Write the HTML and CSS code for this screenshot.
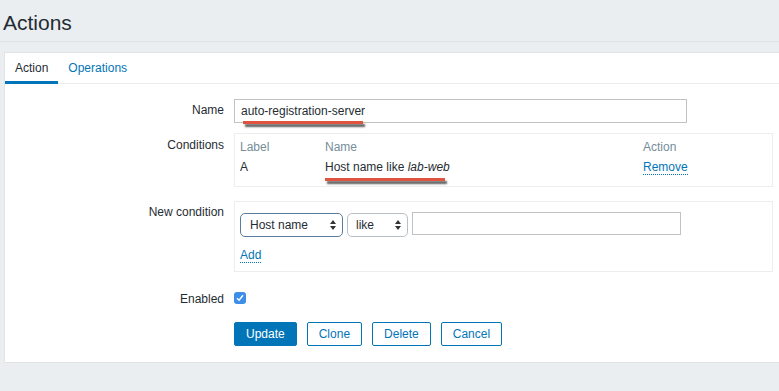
FILE: index.html
```html
<!DOCTYPE html>
<html lang="en">
<head>
    <meta charset="UTF-8">
    <meta name="viewport" content="width=device-width, initial-scale=1.0">
    <title>Actions</title>
    <link rel="stylesheet" href="styles.css">
</head>
<body>
    <h1 class="page-title">Actions</h1>

    <div class="panel">
        <div class="tabs">
            <span class="tab tab-active">Action</span>
            <span class="tab">Operations</span>
        </div>

        <div class="form">
            <div class="form-row row-name">
                <label class="form-label">Name</label>
                <div class="form-field">
                    <input class="text-input name-input" type="text" value="auto-registration-server">
                    <span class="mark mark-name"></span>
                </div>
            </div>

            <div class="form-row row-conditions">
                <label class="form-label">Conditions</label>
                <div class="form-field">
                    <div class="box conditions-box">
                        <table class="conditions">
                            <tr class="cond-head">
                                <td class="col-label">Label</td>
                                <td class="col-name">Name</td>
                                <td>Action</td>
                            </tr>
                            <tr>
                                <td class="col-label">A</td>
                                <td class="col-name">Host name like <em>lab-web</em><span class="mark mark-cond"></span></td>
                                <td><a class="link">Remove</a></td>
                            </tr>
                        </table>
                    </div>
                </div>
            </div>

            <div class="form-row row-new">
                <label class="form-label">New condition</label>
                <div class="form-field">
                    <div class="box new-box">
                        <div class="new-controls">
                            <div class="select select-focus select-type">
                                <span>Host name</span>
                                <svg width="6" height="10" viewBox="0 0 6 10"><path d="M3 0 L6 4 H0 Z M3 10 L6 6 H0 Z" fill="#333"/></svg>
                            </div>
                            <div class="select select-op">
                                <span>like</span>
                                <svg width="6" height="10" viewBox="0 0 6 10"><path d="M3 0 L6 4 H0 Z M3 10 L6 6 H0 Z" fill="#333"/></svg>
                            </div>
                            <input class="text-input value-input" type="text">
                        </div>
                        <a class="link add-link">Add</a>
                    </div>
                </div>
            </div>

            <div class="form-row row-enabled">
                <label class="form-label">Enabled</label>
                <div class="form-field">
                    <span class="checkbox">
                        <svg width="8" height="8" viewBox="0 0 8 8"><path d="M1 4.2 L3.1 6.3 L7 1.3" fill="none" stroke="#fff" stroke-width="1.4"/></svg>
                    </span>
                </div>
            </div>

            <div class="form-row row-buttons">
                <span class="form-label"></span>
                <div class="form-field buttons">
                    <button class="btn btn-main">Update</button>
                    <button class="btn">Clone</button>
                    <button class="btn">Delete</button>
                    <button class="btn">Cancel</button>
                </div>
            </div>
        </div>
    </div>
</body>
</html>
```

FILE: styles.css
```css
body {
    margin: 0;
    background-color: #ebeef0;
    font-family: "Liberation Sans", Arial, sans-serif;
    font-size: 12px;
    color: #1f2c33;
}
.page-title {
    margin: 0;
    padding: 11px 0 6px 3px;
    font-size: 21px;
    line-height: 24px;
    font-weight: normal;
    color: #1f2c33;
    border-bottom: 1px solid #dde1e4;
}
.panel {
    margin: 10px 0 0 4px;
    background-color: #fff;
    border: 1px solid #dfe4e7;
    border-right: none;
}
.tabs {
    display: flex;
    box-shadow: inset 0 -1px 0 #ebeef0;
}
.tab {
    padding: 6px 10px 4px;
    line-height: 18px;
    border-bottom: 3px solid transparent;
    color: #0275b8;
}
.tab-active {
    color: #1f2c33;
    border-bottom-color: #0275b8;
}
.form {
    padding: 15px 0 16px;
}
.form-row {
    display: grid;
    grid-template-columns: 219px 1fr;
    column-gap: 10px;
    align-items: start;
}
.row-name { margin-bottom: 10px; }
.row-conditions { margin-bottom: 14px; }
.row-new { margin-bottom: 15px; }
.row-enabled { margin-bottom: 11px; }
.form-label {
    text-align: right;
    line-height: 23px;
}
.row-conditions .form-label {
    margin-top: 1px;
}
.row-enabled .form-label {
    margin-top: 1px;
}
.form-field {
    position: relative;
}
.text-input {
    box-sizing: border-box;
    height: 24px;
    border: 1px solid #bfc3c6;
    padding: 0 6px;
    font-family: inherit;
    font-size: 12px;
    color: #1f2c33;
    outline: none;
}
.name-input {
    width: 453px;
}
.box {
    box-sizing: border-box;
    width: 539px;
    border: 1px solid #ebeef0;
}
.conditions-box {
    padding: 3px 5px 9px;
}
.conditions {
    border-collapse: collapse;
}
.conditions td {
    padding: 0;
    height: 20px;
    line-height: 20px;
    vertical-align: middle;
}
.cond-head td {
    color: #768d99;
}
.col-label {
    width: 85px;
}
.col-name {
    width: 318px;
    position: relative;
}
.link {
    color: #0275b8;
    border-bottom: 1px dotted #0275b8;
    line-height: 14px;
    display: inline-block;
}
.new-box {
    padding: 11px 5px 8px;
}
.new-controls {
    display: flex;
    gap: 4px;
}
.select {
    box-sizing: border-box;
    height: 24px;
    display: flex;
    align-items: center;
    justify-content: space-between;
    padding: 0 6px 0 9px;
    border: 1px solid #b9c0c5;
    border-radius: 5px;
    background-color: #fff;
}
.select-focus {
    border-color: #5a7d9c;
}
.select-type {
    width: 103px;
}
.select-op {
    width: 61px;
    padding-left: 8px;
}
.value-input {
    width: 269px;
    height: 23px;
    margin-top: -1px;
}
.add-link {
    margin-top: 11px;
}
.checkbox {
    display: flex;
    align-items: center;
    justify-content: center;
    width: 12px;
    height: 12px;
    margin-top: 5px;
    border-radius: 3px;
    background-color: #3d8ee8;
}
.buttons {
    display: flex;
    gap: 10px;
}
.btn {
    box-sizing: border-box;
    height: 24px;
    padding: 0 11px;
    border: 1px solid #0275b8;
    border-radius: 2px;
    background-color: #fff;
    color: #0275b8;
    font-family: inherit;
    font-size: 12px;
}
.btn-main {
    background-color: #0275b8;
    color: #fff;
}
.mark {
    position: absolute;
    height: 3px;
    background-color: #e0533f;
    box-shadow: 2px 3px 2px rgba(40, 40, 40, 0.75);
}
.mark-name {
    left: 9px;
    top: 22px;
    width: 120px;
}
.mark-cond {
    left: 0;
    top: 21px;
    width: 120px;
}
```
